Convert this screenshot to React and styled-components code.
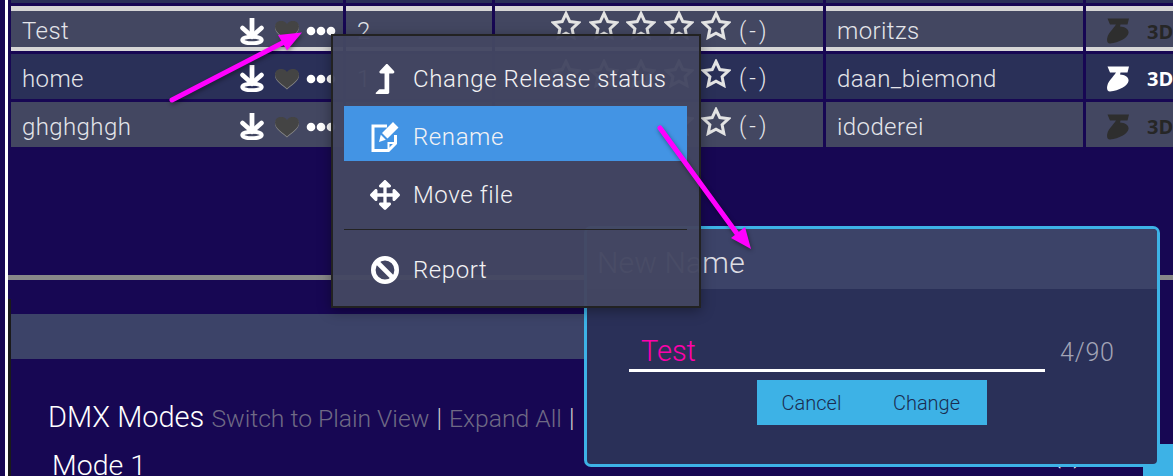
import React from 'react';
import styled, { createGlobalStyle } from 'styled-components';
import { FaLevelUpAlt, FaArrowsAlt } from 'react-icons/fa';

const GlobalStyle = createGlobalStyle`
  body {
    margin: 0;
    background: #170753;
    font-family: 'Roboto', 'Liberation Sans', sans-serif;
    font-weight: 300;
    overflow: hidden;
  }
`;

const FONT_LIGHT = '#e4e5ea';

const rows = [
  { name: 'Test', rev: '2', user: 'moritzs', selected: true, shaded: true, printable: false },
  { name: 'home', rev: '1', user: 'daan_biemond', selected: false, shaded: false, printable: true },
  { name: 'ghghghgh', rev: '1', user: 'idoderei', selected: false, shaded: true, printable: false },
];

const DownloadIcon = () => (
  <svg width="24" height="27" viewBox="0 0 24 27">
    <ellipse cx="12" cy="22" rx="9.700" ry="3.300" fill="none" stroke="#fff" strokeWidth="4" />
    <path d="M12 0v17" stroke="#fff" strokeWidth="4.800" fill="none" />
    <path d="M2.500 10 12 18.500l9.500-8.500" stroke="#fff" strokeWidth="4.600" strokeLinecap="round" fill="none" />
  </svg>
);

const HeartIcon = () => (
  <Heart width="24" height="20" viewBox="0 0 24 20">
    <path d="M12 19.500C8 15.500 0 11.500 0 5.500c0-6.500 9-7.500 12-2.500 3-5 12-4 12 2.500 0 6-8 10-12 14z" fill="#444" />
  </Heart>
);

const DotsIcon = () => (
  <svg width="30" height="10" viewBox="0 0 30 10">
    <circle cx="5" cy="5" r="4.300" fill="#fff" />
    <circle cx="15" cy="5" r="4.300" fill="#fff" />
    <circle cx="25" cy="5" r="4.300" fill="#fff" />
  </svg>
);

const StarIcon = () => (
  <svg width="30" height="29" viewBox="0 0 30 29">
    <polygon
      points="15,2.500 18.800,10.600 27.600,11.700 21.100,17.700 22.800,26.400 15,22.100 7.200,26.400 8.900,17.700 2.400,11.700 11.200,10.600"
      fill="none"
      stroke="#e4e4e4"
      strokeWidth="3"
      strokeLinejoin="miter"
    />
  </svg>
);

const PrinterLogo = ({ active }) => (
  <svg width="23" height="26" viewBox="0 0 23 26">
    <path
      d="M0.500 0.500H22L20.500 6.500H13.500L13 8.500C18 9 22 11 21.500 15 21 20 12 24.500 3 25.500 0 25.500-.5 22 .5 19 1.500 15 6 11 9 6.500H3z"
      fill={active ? '#fff' : '#2e2e2e'}
    />
  </svg>
);

const EditIcon = () => (
  <svg width="28" height="30" viewBox="0 0 28 30">
    <path
      d="M16 4H2v24.500h15.500l7-7V13"
      fill="none"
      stroke="#fff"
      strokeWidth="3"
      strokeLinejoin="miter"
    />
    <path d="M17.500 28V21H25" fill="none" stroke="#fff" strokeWidth="2" />
    <path d="M22 0l5.500 5.500-11 11-5.500-5.500zM9.800 12.700l5 5L8 20z" fill="#fff" />
  </svg>
);

const BanIcon = () => (
  <svg width="28" height="28" viewBox="0 0 28 28">
    <circle cx="14" cy="14" r="11.700" fill="none" stroke="#fff" strokeWidth="4.600" />
    <path d="M6 6l16 16" stroke="#fff" strokeWidth="4.600" />
  </svg>
);

const Arrows = () => (
  <ArrowLayer width="1173" height="476" viewBox="0 0 1173 476">
    <path d="M172 100 292 38" stroke="#ff00ff" strokeWidth="5" strokeLinecap="round" fill="none" />
    <polygon points="302,32.500 278,35 287,50.500" fill="#ff00ff" />
    <path d="M660 128 738 235" stroke="#ff00ff" strokeWidth="5" strokeLinecap="round" fill="none" />
    <polygon points="751,249 731,238 745,227" fill="#ff00ff" />
  </ArrowLayer>
);

const App = () => {
  return (
    <Page>
      <GlobalStyle />
      <Content>
        <Table>
          <TopCell />
          <TopCell />
          <TopCell />
          <TopCell />
          <TopCell />
          {rows.map((row) => (
            <React.Fragment key={row.name}>
              <Cell $selected={row.selected} $shaded={row.shaded}>
                <Name>{row.name}</Name>
                <Actions>
                  <DownloadIcon />
                  <HeartIcon />
                  <DotsIcon />
                </Actions>
              </Cell>
              <Cell $selected={row.selected} $shaded={row.shaded}>
                <Value>{row.rev}</Value>
              </Cell>
              <Cell $selected={row.selected} $shaded={row.shaded}>
                <Stars>
                  {[0, 1, 2, 3, 4].map((i) => (
                    <StarIcon key={i} />
                  ))}
                </Stars>
                <Score>(-)</Score>
              </Cell>
              <Cell $selected={row.selected} $shaded={row.shaded}>
                <Value>{row.user}</Value>
              </Cell>
              <Cell $selected={row.selected} $shaded={row.shaded}>
                <Printer>
                  <PrinterLogo active={row.printable} />
                  <PrinterLabel $active={row.printable}>3D</PrinterLabel>
                </Printer>
              </Cell>
            </React.Fragment>
          ))}
        </Table>

        <Rule />

        <Section>
          <Band />
          <Heading>
            DMX Modes <Muted>Switch to Plain View</Muted> <Pipe>|</Pipe> <Muted>Expand All</Muted> <Pipe>|</Pipe>
          </Heading>
          <ModeRow>
            <ModeTitle>Mode 1</ModeTitle>
            <ModeScore>(-)</ModeScore>
            <SideBlock />
          </ModeRow>
        </Section>
      </Content>

      <Dialog>
        <DialogHeader>New Name</DialogHeader>
        <DialogBody>
          <InputRow>
            <InputLine>Test</InputLine>
            <Counter>4/90</Counter>
          </InputRow>
          <ButtonGroup>
            <DialogButton>Cancel</DialogButton>
            <DialogButton>Change</DialogButton>
          </ButtonGroup>
        </DialogBody>
      </Dialog>

      <Menu>
        <MenuItem>
          <MenuIcon><FaLevelUpAlt size={30} /></MenuIcon>
          <span>Change Release status</span>
        </MenuItem>
        <MenuItem $active>
          <MenuIcon><EditIcon /></MenuIcon>
          <span>Rename</span>
        </MenuItem>
        <MenuItem>
          <MenuIcon><FaArrowsAlt size={30} /></MenuIcon>
          <span>Move file</span>
        </MenuItem>
        <MenuDivider />
        <MenuItem>
          <MenuIcon><BanIcon /></MenuIcon>
          <span>Report</span>
        </MenuItem>
      </Menu>

      <Arrows />
    </Page>
  );
};

const Page = styled.div`
  position: relative;
  width: 1173px;
  height: 476px;
  overflow: hidden;
  background: #170753;
  color: ${FONT_LIGHT};
`;

const Content = styled.div`
  margin-left: 5px;
  height: 476px;
  border-left: 3px solid #fff;
  box-sizing: border-box;
`;

const Table = styled.div`
  display: grid;
  grid-template-columns: 332px 146px 328px 257px 90px;
  grid-template-rows: 3px 45px 45px 45px;
  gap: 3px;
  padding-left: 3px;
`;

const TopCell = styled.div`
  background: #2a3058;
`;

const Cell = styled.div`
  display: flex;
  align-items: center;
  box-sizing: border-box;
  min-width: 0;
  padding-top: 4px;
  background: ${(p) => (p.$shaded ? '#434761' : '#2a3058')};
  border-top: ${(p) => (p.$selected ? '5px solid #d6d6d6' : 'none')};
  border-bottom: ${(p) => (p.$selected ? '4px solid #d6d6d6' : 'none')};
`;

const Name = styled.span`
  padding-left: 11px;
  font-size: 24px;
  letter-spacing: 0.4px;
`;

const Actions = styled.div`
  margin-left: auto;
  padding-right: 7px;
  display: flex;
  align-items: center;
  gap: 7px;
`;

const Heart = styled.svg`
  margin-left: 4px;
  filter: drop-shadow(0 1px 0 #8a8a8a);
`;

const Value = styled.span`
  padding-left: 11px;
  font-size: 24px;
  letter-spacing: 0.4px;
`;

const Stars = styled.div`
  display: flex;
  gap: 7.500px;
  margin: -11px 0 0 56px;
`;

const Score = styled.span`
  margin-left: 8px;
  font-size: 23px;
  letter-spacing: 3px;
`;

const Printer = styled.div`
  display: flex;
  align-items: center;
  gap: 17px;
  padding-left: 21px;
`;

const PrinterLabel = styled.span`
  font-family: 'Open Sans', 'DejaVu Sans', sans-serif;
  font-weight: 700;
  font-size: 20px;
  color: ${(p) => (p.$active ? '#fff' : '#262626')};
`;

const Rule = styled.div`
  margin-top: 128px;
  height: 5px;
  background: #888;
`;

const Section = styled.section`
  margin-top: 19px;
  border-left: 3px solid #1a1a1a;
  padding-top: 15px;
  height: 177px;
  box-sizing: border-box;
`;

const Band = styled.div`
  height: 45px;
  width: 1132px;
  background: #3c4368;
`;

const Heading = styled.h2`
  margin: 40px 0 0 37px;
  font-size: 29px;
  line-height: 36px;
  font-weight: 300;
  color: #fff;
  white-space: nowrap;
`;

const Muted = styled.span`
  font-size: 24.700px;
  color: #6f6a85;
`;

const Pipe = styled.span`
  font-size: 25px;
  color: #ccc;
`;

const ModeRow = styled.div`
  display: flex;
  align-items: flex-start;
  margin: 7px 0 0 41px;
`;

const ModeTitle = styled.div`
  padding-top: 2px;
  font-size: 28.500px;
  line-height: 40px;
  color: #fff;
`;

const ModeScore = styled.div`
  margin-left: auto;
  font-size: 23px;
  line-height: 24px;
  letter-spacing: 3px;
  color: #fff;
`;

const SideBlock = styled.div`
  margin-left: 59px;
  flex: none;
  width: 30px;
  height: 40px;
  background: #3db2e6;
`;

const Menu = styled.div`
  position: absolute;
  left: 331px;
  top: 34px;
  width: 370px;
  height: 274px;
  box-sizing: border-box;
  padding: 12px 12px 12px 11px;
  display: flex;
  flex-direction: column;
  gap: 3px;
  background: rgba(67, 71, 97, 0.965);
  border: 2px solid #222;
  box-shadow: 0 3px 12px rgba(0, 0, 0, 0.35);
  color: #f2f2f4;
`;

const MenuItem = styled.div`
  display: flex;
  align-items: center;
  flex: none;
  height: 55px;
  box-sizing: border-box;
  padding: 6px 0 0 20px;
  font-size: 24px;
  letter-spacing: 0.6px;
  background: ${(p) => (p.$active ? '#4394e4' : 'transparent')};
`;

const MenuIcon = styled.span`
  display: flex;
  align-items: center;
  justify-content: center;
  width: 42px;
  margin-right: 7px;
  color: #fff;
`;

const MenuDivider = styled.div`
  flex: none;
  height: 1px;
  margin: 7px 0 6px;
  background: #232323;
`;

const Dialog = styled.div`
  position: absolute;
  left: 584px;
  top: 226px;
  width: 576px;
  height: 241px;
  box-sizing: border-box;
  border: 3px solid #3db2e6;
  border-radius: 7px;
  background: #2a3058;
  overflow: hidden;
`;

const DialogHeader = styled.div`
  height: 60px;
  box-sizing: border-box;
  padding: 16px 0 0 10px;
  background: #3c4368;
  font-size: 30px;
  letter-spacing: 0.2px;
  line-height: 36px;
  color: #dcdde3;
`;

const DialogBody = styled.div`
  display: flex;
  flex-direction: column;
  align-items: center;
`;

const InputRow = styled.div`
  display: flex;
  align-items: flex-end;
  width: 100%;
  box-sizing: border-box;
  padding: 42px 0 0 42px;
`;

const InputLine = styled.div`
  width: 416px;
  box-sizing: border-box;
  padding-left: 12px;
  height: 41px;
  border-bottom: 3px solid #fff;
  font-size: 29px;
  line-height: 40px;
  color: #f0a;
`;

const Counter = styled.div`
  margin-left: 15px;
  padding-bottom: 5px;
  font-size: 25px;
  letter-spacing: 0.8px;
  line-height: 28px;
  color: #a2a4b6;
`;

const ButtonGroup = styled.div`
  display: flex;
  margin-top: 8px;
  background: #3db2e6;
`;

const DialogButton = styled.div`
  width: 115px;
  height: 45px;
  box-sizing: border-box;
  padding-right: 6px;
  display: flex;
  align-items: center;
  justify-content: center;
  font-size: 20px;
  color: #1a2c50;
`;

const ArrowLayer = styled.svg`
  position: absolute;
  left: 0;
  top: 0;
  pointer-events: none;
  filter: drop-shadow(1px 2px 2px rgba(0, 0, 0, 0.4));
`;

export default App;
